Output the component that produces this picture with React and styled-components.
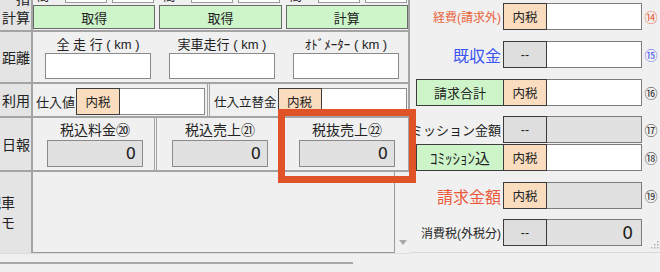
import styled, { createGlobalStyle } from "styled-components";

const GlobalStyle = createGlobalStyle`
  html, body {
    margin: 0;
    padding: 0;
    background: #f0f0f0;
  }
  body {
    font-family: "Liberation Sans", "Noto Sans CJK JP", sans-serif;
    color: #222;
  }
`;

const kmCells = ["全 走 行 ( km )", "実車走行 ( km )", "ｵﾄﾞﾒｰﾀｰ ( km )"];
const dailyCells = ["税込料金⑳", "税込売上㉑", "税抜売上㉒"];
const topButtons = ["取得", "取得", "計算"];

const rightRows = [
  { label: "経費(請求外)", color: "#e8643c", size: 12, box: "内税", num: "⑭", numColor: "#e8643c", gap: 0 },
  { label: "既収金", color: "#3a55f2", size: 16, box: "--", num: "⑮", numColor: "#4a5cf0", gap: 11 },
  { green: "請求合計", greenSize: 13, box: "内税", num: "⑯", gap: 11 },
  { label: "コミッション金額", color: "#222", size: 13, box: "--", gray: true, num: "⑰", gap: 10 },
  { green: "ｺﾐｯｼｮﾝ込", greenSize: 15, box: "内税", num: "⑱", gap: 1 },
  { label: "請求金額", color: "#ec5a3c", size: 16, box: "内税", gray: true, num: "⑲", gap: 11 },
  { label: "消費税(外税分)", color: "#222", size: 12, box: "--", gray: true, value: "0", grip: true, gap: 10 },
];

export default function App() {
  return (
    <>
      <GlobalStyle />
      <Screen>
        <LeftPane>
          <Row $h={32}>
            <Label $tall>
              <span>指</span>
              <span>計算</span>
            </Label>
            <ButtonsBody>
              {topButtons.map((b, i) => (
                <ButtonCol key={i}>
                  <Strip>
                    <StripText>時間</StripText>
                    <StripBox />
                    <StripBox />
                  </Strip>
                  <GreenButton>{b}</GreenButton>
                </ButtonCol>
              ))}
            </ButtonsBody>
          </Row>

          <Row $h={52}>
            <Label $center>距離</Label>
            <ThreeBody>
              {kmCells.map((c, i) => (
                <KmCell key={i}>
                  <CellLabel>{c}</CellLabel>
                  <WhiteInput />
                </KmCell>
              ))}
            </ThreeBody>
          </Row>

          <Row $h={34}>
            <Label $center>利用</Label>
            <HalfBody>
              <Half $first>
                <InlineLabel $size={13}>仕入値</InlineLabel>
                <TaxBox>内税</TaxBox>
                <FlexInput />
              </Half>
              <Half>
                <InlineLabel $size={12.5}>仕入立替金</InlineLabel>
                <TaxBox>内税</TaxBox>
                <FlexInput />
              </Half>
            </HalfBody>
          </Row>

          <Row $h={54}>
            <Label $center>日報</Label>
            <DailyBody>
              {dailyCells.map((c, i) => (
                <DailyCell key={i} $last={i === 2}>
                  <DailyLabel>{c}</DailyLabel>
                  <GrayValue>0</GrayValue>
                </DailyCell>
              ))}
            </DailyBody>
          </Row>

          <Row $h={81} $noBorder>
            <MemoLabel>
              <span>配車</span>
              <span>メモ</span>
            </MemoLabel>
            <MemoBody>
              <Memo />
              <ScrollCol>
                <DownArrow />
              </ScrollCol>
            </MemoBody>
          </Row>

          <LeftFooter>
            <HScroll />
          </LeftFooter>
        </LeftPane>

        <RightPane>
          {rightRows.map((r, i) => (
            <RRow key={i} $gap={r.gap}>
              {r.green ? (
                <GreenCell>
                  <GreenLabel $size={r.greenSize}>{r.green}</GreenLabel>
                </GreenCell>
              ) : (
                <RLabel $color={r.color} $size={r.size}>
                  {r.label}
                </RLabel>
              )}
              <TaxBox $dash={r.box === "--"}>{r.box}</TaxBox>
              <RInput $gray={r.gray}>{r.value}</RInput>
              <Num $color={r.numColor}>
                {r.num}
                {r.grip && (
                  <svg width="8" height="8" viewBox="0 0 8 8">
                    {[
                      [6, 0],
                      [6, 3],
                      [3, 3],
                      [6, 6],
                      [3, 6],
                      [0, 6],
                    ].map(([x, y], k) => (
                      <rect key={k} x={x} y={y} width="1.5" height="1.5" fill="#b0b0b0" />
                    ))}
                  </svg>
                )}
              </Num>
            </RRow>
          ))}
          <RightFooter />
        </RightPane>

        <Highlight />
      </Screen>
    </>
  );
}

// ========== STYLED COMPONENTS ==============================

const Screen = styled.div`
  position: relative;
  width: 660px;
  height: 272px;
  display: flex;
  overflow: hidden;
  background: #f0f0f0;
`;

const LeftPane = styled.div`
  width: 410px;
  flex: none;
  display: flex;
  flex-direction: column;
`;

const Row = styled.div`
  display: grid;
  grid-template-columns: 33px 1fr;
  height: ${(p) => p.$h}px;
  flex: none;
  box-sizing: border-box;
  border-bottom: ${(p) => (p.$noBorder ? "none" : "2px solid #a4a4a4")};
`;

const Label = styled.div`
  box-sizing: border-box;
  background: #e4e4e4;
  border-right: 2px solid #a4a4a4;
  display: flex;
  flex-direction: column;
  justify-content: ${(p) => (p.$center ? "center" : "flex-end")};
  align-items: flex-end;
  padding: ${(p) => (p.$center ? "0 1px 0 0" : "0 1px 3px 0")};
  overflow: hidden;
  font-family: "Noto Sans CJK JP", sans-serif;
  font-size: 14px;
  line-height: ${(p) => (p.$tall ? 19 : 16)}px;
  white-space: nowrap;
`;

const MemoLabel = styled(Label)`
  justify-content: flex-start;
  padding: 20px 16px 0 0;
  line-height: 20px;
`;

const ButtonsBody = styled.div`
  display: grid;
  grid-template-columns: repeat(3, 1fr);
  column-gap: 4px;
  border-right: 2px solid #a4a4a4;
`;

const ButtonCol = styled.div`
  display: flex;
  flex-direction: column;
  min-width: 0;
`;

const Strip = styled.div`
  display: flex;
  align-items: flex-end;
  gap: 5px;
  height: 10px;
  margin-top: -7px;
  padding-left: 4px;
`;

const StripText = styled.span`
  width: 23px;
  font-size: 12px;
  line-height: 12px;
`;

const StripBox = styled.div`
  width: 42px;
  height: 10px;
  box-sizing: border-box;
  background: #fff;
  border: 1px solid #9a9a9a;
`;

const GreenButton = styled.div`
  margin-top: 2px;
  height: 24px;
  box-sizing: border-box;
  background: #cdf5c9;
  border: 1px solid #6a6a6a;
  display: flex;
  align-items: center;
  justify-content: center;
  font-size: 13px;
`;

const ThreeBody = styled.div`
  display: grid;
  grid-template-columns: repeat(3, 1fr);
  border-right: 2px solid #a4a4a4;
  padding-left: 3px;
`;

const KmCell = styled.div`
  display: flex;
  flex-direction: column;
  align-items: center;
  padding-top: 4px;
`;

const CellLabel = styled.div`
  height: 17px;
  font-size: 13px;
  line-height: 17px;
  white-space: pre;
`;

const WhiteInput = styled.div`
  width: 106px;
  height: 26px;
  box-sizing: border-box;
  background: #fff;
  border: 1px solid #8a8a8a;
`;

const HalfBody = styled.div`
  display: grid;
  grid-template-columns: 177px 1fr;
  border-right: 2px solid #a4a4a4;
`;

const Half = styled.div`
  display: flex;
  align-items: center;
  box-sizing: border-box;
  padding: 2px ${(p) => (p.$first ? 2 : 1)}px 0 ${(p) => (p.$first ? 3 : 4)}px;
  border-right: ${(p) => (p.$first ? "3px double #a4a4a4" : "none")};
`;

const InlineLabel = styled.span`
  font-size: ${(p) => p.$size}px;
  white-space: nowrap;
  margin-right: 1px;
`;

const TaxBox = styled.div`
  width: 44px;
  height: 27px;
  box-sizing: border-box;
  flex: none;
  background: ${(p) => (p.$dash ? "#dedede" : "#fadcbf")};
  border: 1px solid #3c3c3c;
  display: flex;
  align-items: center;
  justify-content: center;
  font-size: 12.5px;
`;

const FlexInput = styled.div`
  flex: 1;
  height: 27px;
  box-sizing: border-box;
  background: #fff;
  border: 1px solid #8a8a8a;
  border-left: none;
`;

const DailyBody = styled.div`
  display: grid;
  grid-template-columns: 124px 126px 1fr;
  border-right: 2px solid #a4a4a4;
`;

const DailyCell = styled.div`
  display: flex;
  flex-direction: column;
  align-items: center;
  box-sizing: border-box;
  padding: 3px 0 0 3px;
  border-right: ${(p) => (p.$last ? "none" : "3px double #a4a4a4")};
`;

const DailyLabel = styled.div`
  font-size: 14px;
  line-height: 19px;
  white-space: nowrap;
`;

const GrayValue = styled.div`
  width: 96px;
  height: 27px;
  box-sizing: border-box;
  background: #e1e1e1;
  border: 1px solid #8a8a8a;
  display: flex;
  align-items: center;
  justify-content: flex-end;
  padding-right: 6px;
  font-family: "DejaVu Sans", sans-serif;
  font-size: 16px;
`;

const MemoBody = styled.div`
  display: grid;
  grid-template-columns: 1fr 15px;
`;

const Memo = styled.div`
  background: #f0f0f0;
  border-right: 1px solid #9a9a9a;
  border-bottom: 1px solid #9a9a9a;
`;

const ScrollCol = styled.div`
  display: flex;
  align-items: flex-end;
  justify-content: center;
  padding-bottom: 8px;
`;

const DownArrow = styled.div`
  width: 0;
  height: 0;
  border-left: 4px solid transparent;
  border-right: 4px solid transparent;
  border-top: 5px solid #a8a8a8;
`;

const LeftFooter = styled.div`
  flex: 1;
  border-top: 1px solid #dcdcdc;
  padding-top: 8px;
`;

const HScroll = styled.div`
  width: 353px;
  height: 2px;
  background: #a8a8a8;
`;

const RightPane = styled.div`
  flex: 1;
  display: flex;
  flex-direction: column;
  padding-top: 3px;
  overflow: hidden;
  min-width: 0;
`;

const RRow = styled.div`
  display: grid;
  grid-template-columns: 93px 44px 95px 1fr;
  height: 27px;
  margin-top: ${(p) => p.$gap}px;
  flex: none;
`;

const RLabel = styled.div`
  display: flex;
  align-items: center;
  justify-content: flex-end;
  padding-right: 2px;
  overflow: hidden;
  white-space: nowrap;
  color: ${(p) => p.$color};
  font-size: ${(p) => p.$size}px;
`;

const GreenCell = styled.div`
  padding-left: 6px;
  display: flex;
`;

const GreenLabel = styled.div`
  flex: 1;
  box-sizing: border-box;
  background: #cdf5c9;
  border: 1px solid #3c3c3c;
  border-right: none;
  display: flex;
  align-items: center;
  justify-content: center;
  font-size: ${(p) => p.$size}px;
  white-space: nowrap;
`;

const RInput = styled.div`
  box-sizing: border-box;
  background: ${(p) => (p.$gray ? "#e1e1e1" : "#fff")};
  border: 1px solid #7c7c7c;
  border-left: none;
  display: flex;
  align-items: center;
  justify-content: flex-end;
  padding-right: 8px;
  font-family: "DejaVu Sans", sans-serif;
  font-size: 17px;
`;

const Num = styled.div`
  display: flex;
  align-items: center;
  justify-content: center;
  font-family: "Noto Sans CJK JP", sans-serif;
  font-size: 13px;
  color: ${(p) => p.$color || "#333"};

  svg {
    align-self: flex-end;
    margin: 0 0 -3px 8px;
  }
`;

const RightFooter = styled.div`
  margin-top: 6px;
  flex: 1;
  border-top: 1px solid #d8d8d8;
`;

const Highlight = styled.div`
  position: absolute;
  left: 278px;
  top: 109px;
  width: 138px;
  height: 74px;
  box-sizing: border-box;
  border: 7px solid #e05329;
  pointer-events: none;
`;
